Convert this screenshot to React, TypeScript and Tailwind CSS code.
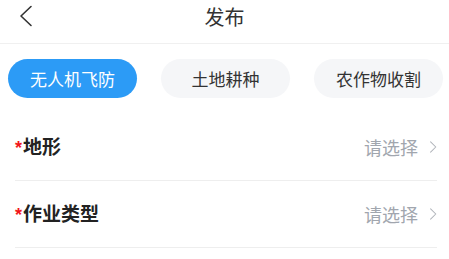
import React, { useState } from 'react';

const tabs = ['无人机飞防', '土地耕种', '农作物收割'];
const fields = ['地形', '作业类型'];

function Chevron({ className }: { className?: string }) {
    return (
        <svg viewBox="0 0 10 16" className={className} fill="none" stroke="currentColor" strokeWidth="1.3" strokeLinecap="round" strokeLinejoin="round">
            <path d="M2 1.5 L8.5 8 L2 14.5" />
        </svg>
    );
}

export default function App() {
    const [active, setActive] = useState(0);

    return (
        <div className="w-[449px] h-[259px] bg-white overflow-hidden" style={{ fontFamily: '"Noto Sans CJK SC", "Noto Sans", sans-serif' }}>
            {/* header */}
            <div className="relative h-[44px] flex items-center justify-center border-b border-[#f0f0f0]">
                <button className="absolute left-[19px] top-[5px] text-[#333]">
                    <svg viewBox="0 0 14 22" className="w-[14px] h-[22px]" fill="none" stroke="currentColor" strokeWidth="1.6" strokeLinecap="round" strokeLinejoin="round">
                        <path d="M12 1.5 L2 11 L12 20.5" />
                    </svg>
                </button>
                <span className="text-[20px] text-[#333] leading-none -mt-[10px]">发布</span>
            </div>

            {/* tabs */}
            <div className="flex gap-[24px] pl-[8px] mt-[15px]">
                {tabs.map((t, i) => (
                    <button
                        key={t}
                        onClick={() => setActive(i)}
                        className={
                            'w-[129px] h-[39px] shrink-0 rounded-full text-[17px] leading-none ' +
                            (i === active ? 'bg-[#2c9bf6] text-white' : 'bg-[#f5f6f8] text-[#333]')
                        }
                    >
                        {t}
                    </button>
                ))}
            </div>

            {/* fields */}
            <div className="pl-[15px] pr-[12px] mt-[16px]">
                {fields.map(f => (
                    <div key={f} className="h-[67px] flex items-center justify-between border-b border-[#eeeeee]">
                        <div className="flex items-center -mt-[1px]">
                            <span className="text-[#f2161a] text-[18px] font-bold mt-[3px] mr-[1px]" style={{ fontFamily: '"Liberation Sans", sans-serif' }}>*</span>
                            <span className="text-[19px] font-bold text-[#222]">{f}</span>
                        </div>
                        <div className="flex items-center text-[#a1a6ae]">
                            <span className="text-[18px]">请选择</span>
                            <Chevron className="w-[8px] h-[14px] ml-[11px] text-[#b0b4ba]" />
                        </div>
                    </div>
                ))}
            </div>
        </div>
    );
}
